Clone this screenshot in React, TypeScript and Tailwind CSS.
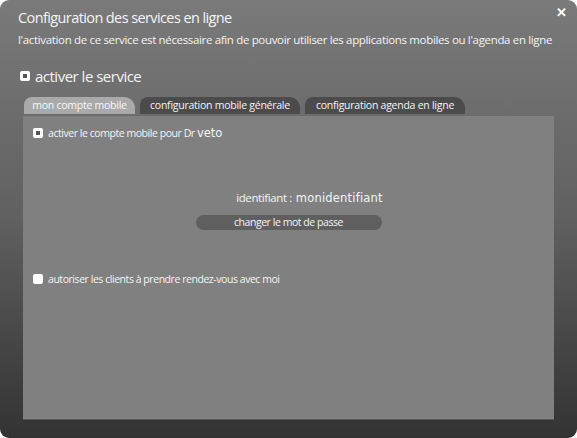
import React from "react";

function Check({ checked }: { checked: boolean }) {
  return (
    <span className="inline-flex h-[10px] w-[10px] shrink-0 items-center justify-center rounded-[2px] bg-white">
      {checked && <span className="h-[4px] w-[4px] bg-[#555]" />}
    </span>
  );
}

export default function App() {
  const font = { fontFamily: '"Open Sans", "Noto Sans", sans-serif' };
  const dv = { fontFamily: '"DejaVu Sans", sans-serif' };
  return (
    <div className="h-[438px] w-[577px] bg-white">
      <div
        className="relative flex h-[438px] w-[577px] flex-col rounded-[9px] bg-gradient-to-b from-[#7a7a7a] via-[#606060] to-[#333333] text-[#f4f4f4]"
        style={font}
      >
        <button className="absolute right-[10px] top-[6px] text-[13px] font-bold leading-none text-white">✕</button>
        <div className="pl-[18px] pt-[8px] text-[14.5px] leading-[20px] tracking-[-0.6px]">
          Configuration des services en ligne
        </div>
        <div className="pl-[18px] pt-[3px] text-[11.5px] leading-[18px] tracking-[-0.34px]">
          l'activation de ce service est nécessaire afin de pouvoir utiliser les applications mobiles ou l'agenda en ligne
        </div>
        <div className="mt-[17px] flex items-center gap-[5px] pl-[20px] text-[15px] leading-[20px] tracking-[-0.5px]">
          <Check checked />
          <span>activer le service</span>
        </div>
        <div className="mx-[24px] mt-[10px] flex h-[18px] items-end gap-[5px] text-[10.5px] tracking-[-0.25px]">
          <div className="flex h-[17px] w-[111px] items-center justify-center rounded-tl-[8px] rounded-tr-[11px] bg-[#a9a9a9] text-[#f8f8f8]">
            mon compte mobile
          </div>
          <div className="flex h-[17px] w-[160px] items-center justify-center rounded-tl-[8px] rounded-tr-[11px] bg-[#4b4b4b]">
            configuration mobile générale
          </div>
          <div className="flex h-[17px] w-[160px] items-center justify-center rounded-tl-[8px] rounded-tr-[11px] bg-[#4b4b4b]">
            configuration agenda en ligne
          </div>
        </div>
        <div className="mx-[23px] mt-[2px] flex h-[303px] flex-col bg-[#808080] text-[10.5px] tracking-[-0.45px] shadow-[0_1px_0_#5a5a5a]">
          <div className="mt-[10px] flex items-center gap-[5px] pl-[10px] leading-[14px]">
            <Check checked />
            <span>
              activer le compte mobile pour Dr{" "}
              <span className="text-[11.5px] tracking-[0px]" style={dv}>veto</span>
            </span>
          </div>
          <div className="mt-[51px] flex items-center justify-center pl-[42px] leading-[14px]">
            <span className="text-[11.5px] tracking-[-0.4px]">identifiant :</span>
            <span className="ml-[4px] text-[11.5px] tracking-[0.2px]" style={dv}>monidentifiant</span>
          </div>
          <div className="mt-[10px] flex justify-center">
            <div className="flex h-[15px] w-[186px] items-center justify-center rounded-full bg-[#5f5f5f] text-[10.5px] leading-none">
              changer le mot de passe
            </div>
          </div>
          <div className="mt-[42px] flex items-center gap-[5px] pl-[10px] leading-[14px]">
            <Check checked={false} />
            <span>autoriser les clients à prendre rendez-vous avec moi</span>
          </div>
        </div>
      </div>
    </div>
  );
}
